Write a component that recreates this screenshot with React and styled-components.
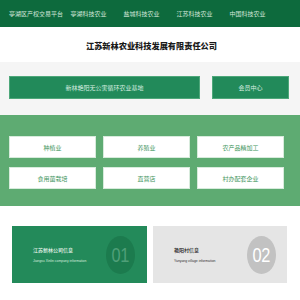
import React from "react";
import styled, { createGlobalStyle } from "styled-components";

const Global = createGlobalStyle`
  html, body { margin: 0; padding: 0; background: #ffffff; }
  body { font-family: "Noto Sans CJK SC", "Liberation Sans", sans-serif; }
  * { box-sizing: border-box; }
`;

const Page = styled.div`
  width: 300px;
  height: 300px;
  overflow: hidden;
  background: #fff;
`;

const Header = styled.div`
  height: 27px;
  background: #0d6a3d;
  display: flex;
  padding-left: 9px;
`;

const NavItem = styled.div`
  width: 53px;
  flex: none;
  text-align: center;
  font-size: 6px;
  line-height: 27px;
  color: #d3e6da;
  white-space: nowrap;
`;

const TitleBar = styled.div`
  height: 35px;
  display: flex;
  align-items: center;
  justify-content: center;
  padding-left: 3px;
  font-size: 8.2px;
  font-weight: 900;
  color: #1a1a1a;
  white-space: nowrap;
`;

const GrayBand = styled.div`
  height: 53px;
  background: #f5f5f5;
  display: flex;
  gap: 12px;
  padding: 14px 0 0 9px;
`;

const GreenButton = styled.div`
  width: ${(p) => p.$w}px;
  height: 23px;
  background: #228a5a;
  border: 1px solid #4ea77a;
  display: flex;
  align-items: center;
  justify-content: center;
  font-size: 6px;
  color: #d8eee0;
  white-space: nowrap;
`;

const GreenSection = styled.div`
  height: 91px;
  background: #5eab72;
  padding: 21px 0 0 9px;
  display: grid;
  grid-template-columns: repeat(3, 87px);
  grid-auto-rows: 22px;
  column-gap: 7px;
  row-gap: 9px;
  align-content: start;
`;

const Tile = styled.div`
  background: #ffffff;
  border: 1px solid #d7ebdc;
  display: flex;
  align-items: center;
  justify-content: center;
  font-size: 6px;
  color: #3f965e;
  white-space: nowrap;
`;

const Cards = styled.div`
  display: flex;
  gap: 6px;
  padding: 20px 0 0 12px;
`;

const Card = styled.div`
  width: ${(p) => p.$w}px;
  height: 57px;
  background: ${(p) => (p.$dark ? "#238a5a" : "#e5e5e5")};
  display: flex;
  align-items: center;
  justify-content: space-between;
  padding: 0 ${(p) => p.$pr}px 0 21px;
`;

const CardText = styled.div`
  display: flex;
  flex-direction: column;
  gap: 6px;
  margin-top: -1px;
`;

const CardTitle = styled.div`
  font-size: 5px;
  font-weight: 500;
  color: ${(p) => (p.$dark ? "#e9f5ed" : "#1a1a1a")};
  white-space: nowrap;
`;

const CardSub = styled.div`
  font-family: "Liberation Sans", Arial, sans-serif;
  font-size: 3.4px;
  color: ${(p) => (p.$dark ? "#d5ebdd" : "#333")};
  white-space: nowrap;
`;

const Badge = styled.div`
  width: 29px;
  height: 38px;
  border-radius: 50%;
  background: ${(p) => (p.$dark ? "#1c7b4e" : "#c2c2c2")};
  display: flex;
  align-items: center;
  justify-content: center;
  flex: none;
`;

const BadgeNum = styled.span`
  display: inline-block;
  font-family: "Liberation Sans", Arial, sans-serif;
  font-weight: 300;
  font-size: 21px;
  line-height: 1;
  letter-spacing: -0.5px;
  transform: scaleX(0.78);
  color: ${(p) => (p.$dark ? "#4f9f78" : "#ffffff")};
`;

const nav = ["亭湖区产权交易平台", "亭湖科技农业", "盐城科技农业", "江苏科技农业", "中国科技农业"];
const tiles = ["种植业", "养殖业", "农产品精加工", "食用菌栽培", "直营店", "村办配套企业"];

export default function App() {
  return (
    <Page>
      <Global />
      <Header>
        {nav.map((n) => (
          <NavItem key={n}>{n}</NavItem>
        ))}
      </Header>
      <TitleBar>江苏新林农业科技发展有限责任公司</TitleBar>
      <GrayBand>
        <GreenButton $w={191}>新林艳阳无公害循环农业基地</GreenButton>
        <GreenButton $w={77}>会员中心</GreenButton>
      </GrayBand>
      <GreenSection>
        {tiles.map((t) => (
          <Tile key={t}>{t}</Tile>
        ))}
      </GreenSection>
      <Cards>
        <Card $w={135} $dark $pr={12}>
          <CardText>
            <CardTitle $dark>江苏新林公司信息</CardTitle>
            <CardSub $dark>Jiangsu Xinlin company information</CardSub>
          </CardText>
          <Badge $dark>
            <BadgeNum $dark>01</BadgeNum>
          </Badge>
        </Card>
        <Card $w={134} $pr={11}>
          <CardText>
            <CardTitle>艳阳村信息</CardTitle>
            <CardSub>Yanyang village information</CardSub>
          </CardText>
          <Badge>
            <BadgeNum>02</BadgeNum>
          </Badge>
        </Card>
      </Cards>
    </Page>
  );
}
